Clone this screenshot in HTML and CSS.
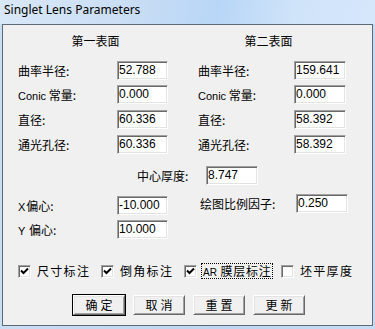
FILE: index.html
```html
<!DOCTYPE html>
<html lang="zh-CN">
<head>
<meta charset="utf-8">
<title>Singlet Lens Parameters</title>
<link rel="stylesheet" href="styles.css">
</head>
<body>
<div class="window">
  <div class="titlebar">Singlet Lens Parameters</div>
  <div class="client">
    <div class="surfaces">
      <section class="col col-left">
        <h2 class="heading">第一表面</h2>
        <div class="fields">
          <div class="field"><span class="label">曲率半径:</span><span class="input">52.788</span></div>
          <div class="field"><span class="label"><span class="latin">Conic</span> 常量:</span><span class="input">0.000</span></div>
          <div class="field"><span class="label">直径:</span><span class="input">60.336</span></div>
          <div class="field"><span class="label">通光孔径:</span><span class="input">60.336</span></div>
        </div>
      </section>
      <section class="col col-right">
        <h2 class="heading">第二表面</h2>
        <div class="fields">
          <div class="field"><span class="label">曲率半径:</span><span class="input">159.641</span></div>
          <div class="field"><span class="label"><span class="latin">Conic</span> 常量:</span><span class="input">0.000</span></div>
          <div class="field"><span class="label">直径:</span><span class="input">58.392</span></div>
          <div class="field"><span class="label">通光孔径:</span><span class="input">58.392</span></div>
        </div>
      </section>
    </div>

    <div class="thick-row">
      <span class="label">中心厚度:</span><span class="input">8.747</span>
    </div>

    <div class="offsets">
      <div class="col col-left offs">
        <div class="field"><span class="label"><span class="latin-x">X</span>偏心:</span><span class="input">-10.000</span></div>
        <div class="field"><span class="label"><span class="latin-x">Y</span> 偏心:</span><span class="input">10.000</span></div>
      </div>
      <div class="col col-right scale">
        <div class="field"><span class="label">绘图比例因子:</span><span class="input">0.250</span></div>
      </div>
    </div>

    <div class="checks">
      <div class="check"><span class="box"><svg viewBox="0 0 9 9" width="9" height="9"><path d="M1 3.5 L3.5 6 L8 1.5" fill="none" stroke="#000" stroke-width="2"/></svg></span><span class="ctext">尺寸标注</span></div>
      <div class="check"><span class="box"><svg viewBox="0 0 9 9" width="9" height="9"><path d="M1 3.5 L3.5 6 L8 1.5" fill="none" stroke="#000" stroke-width="2"/></svg></span><span class="ctext">倒角标注</span></div>
      <div class="check"><span class="box"><svg viewBox="0 0 9 9" width="9" height="9"><path d="M1 3.5 L3.5 6 L8 1.5" fill="none" stroke="#000" stroke-width="2"/></svg></span><span class="ctext focus"><span class="ar">AR</span> 膜层标注</span></div>
      <div class="check"><span class="box"></span><span class="ctext">坯平厚度</span></div>
    </div>

    <div class="buttons">
      <button class="btn btn-default">确定</button>
      <button class="btn">取消</button>
      <button class="btn">重置</button>
      <button class="btn">更新</button>
    </div>
  </div>
</div>
</body>
</html>
```

FILE: styles.css
```css
* {
  box-sizing: border-box;
  margin: 0;
  padding: 0;
}

html, body {
  width: 375px;
  height: 329px;
  overflow: hidden;
}

body {
  background: #c3d9f2;
  font-family: "Liberation Sans", "Noto Sans CJK SC", sans-serif;
  font-size: 12px;
  color: #000;
}

.window {
  width: 375px;
  height: 329px;
  padding: 0 2px 3px 2px;
  background: linear-gradient(90deg, #c9ddf3 0%, #bed6f1 60%, #c6dcf5 100%);
}

.titlebar {
  height: 24px;
  margin: 0 -2px;
  padding-left: 4px;
  font-family: "Noto Sans", "Open Sans", sans-serif;
  font-size: 12px;
  line-height: 20px;
  color: #000;
  background: linear-gradient(100deg, #d9e8f8 0%, #c9ddf4 35%, #b8d6f7 58%, #cfe3f9 78%, #d6e7fb 100%);
}

.client {
  height: 302px;
  border: 1px solid #5d6b79;
  background: #f0f0f0;
}

/* top section: two surfaces */
.surfaces {
  display: grid;
  grid-template-columns: 185px 161px;
  padding-top: 9px;
}

.heading {
  font-size: 12px;
  font-weight: normal;
  line-height: 14px;
  text-align: center;
  font-family: "Noto Sans CJK SC", sans-serif;
}

.fields {
  display: grid;
  grid-template-rows: 24px 25px 25px 19px;
  margin-top: 13px;
}

.col-left .fields,
.col-left.offs {
  padding-left: 15px;
}

.col-right .fields {
  padding-left: 10px;
}

.field {
  display: flex;
  align-items: flex-start;
  height: 19px;
}

.label {
  display: block;
  height: 19px;
  line-height: 19px;
  white-space: nowrap;
  font-family: "Noto Sans CJK SC", sans-serif;
  font-size: 12px;
}

.latin {
  font-family: "Liberation Sans", sans-serif;
  font-size: 11px;
}

.latin-x {
  font-family: "Liberation Sans", sans-serif;
  font-size: 11px;
  margin-right: 1px;
}

.col-left .label {
  width: 99px;
}

.col-right .label {
  width: 96px;
}

.input {
  display: block;
  width: 51px;
  height: 19px;
  background: #fff;
  border: 1px solid;
  border-color: #a0a0a0 #fff #fff #a0a0a0;
  box-shadow: inset 1px 1px 0 #696969, inset -1px -1px 0 #e3e3e3;
  font-family: "Liberation Sans", sans-serif;
  font-size: 12px;
  line-height: 17px;
  padding-left: 1px;
  white-space: nowrap;
  overflow: hidden;
}

.col-right .input {
  width: 52px;
}

/* center thickness */
.thick-row {
  display: flex;
  margin-top: 12px;
  padding-left: 134px;
}

.thick-row .label {
  width: 69px;
}

.thick-row .input {
  width: 52px;
}

/* offsets + scale */
.offsets {
  display: grid;
  grid-template-columns: 185px 163px;
  margin-top: 9px;
}

.offs {
  display: grid;
  grid-template-rows: 24px 19px;
  padding-top: 2px;
}

.scale {
  padding-left: 12px;
}

.scale .label {
  width: 96px;
}

/* checkboxes */
.checks {
  display: flex;
  align-items: center;
  height: 16px;
  margin-top: 24px;
  padding-left: 15px;
}

.check {
  display: flex;
  align-items: center;
  height: 16px;
}

.check-1, .check:nth-child(1) { width: 83px; }
.check:nth-child(2) { width: 83px; }
.check:nth-child(3) { width: 97px; }

.box {
  display: flex;
  align-items: center;
  justify-content: center;
  flex: none;
  width: 13px;
  height: 13px;
  margin-right: 4px;
  background: #fff;
  border: 1px solid;
  border-color: #a0a0a0 #fff #fff #a0a0a0;
  box-shadow: inset 1px 1px 0 #696969, inset -1px -1px 0 #e3e3e3;
}

.box svg {
  display: block;
}

.ctext {
  display: block;
  height: 16px;
  line-height: 14px;
  padding: 0 1px;
  border: 1px solid transparent;
  font-family: "Noto Sans CJK SC", sans-serif;
  font-size: 12px;
  letter-spacing: 1.3px;
  white-space: nowrap;
}

.ctext.focus {
  border: 1px dotted #000;
  letter-spacing: 0.8px;
  padding: 0 0 0 1px;
}

.ar {
  font-family: "Liberation Sans", sans-serif;
  font-size: 10px;
  letter-spacing: 0;
}

/* buttons */
.buttons {
  display: flex;
  gap: 8px;
  margin-top: 16px;
  padding-left: 70px;
}

.btn {
  width: 52px;
  height: 20px;
  background: #f0f0f0;
  border: 1px solid;
  border-color: #fff #696969 #696969 #fff;
  box-shadow: inset 1px 1px 0 #e3e3e3, inset -1px -1px 0 #a0a0a0;
  font-family: "Noto Sans CJK SC", sans-serif;
  font-size: 12px;
  line-height: 16px;
  letter-spacing: 3px;
  padding-left: 3px;
  color: #000;
}

.btn-default {
  outline: 1px solid #000;
  outline-offset: 0;
}
```
